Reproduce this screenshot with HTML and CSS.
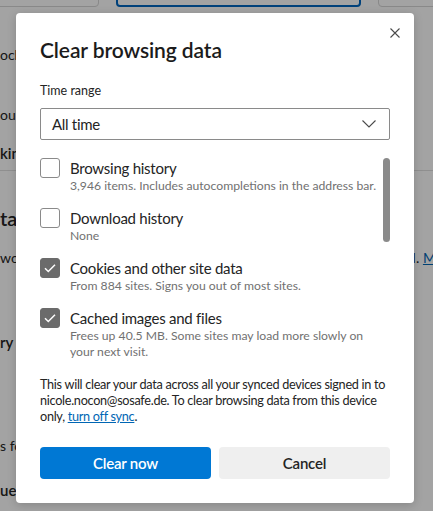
FILE: index.html
```html
<!DOCTYPE html>
<html lang="en">
<head>
<meta charset="utf-8">
<title>Privacy, search, and services</title>
<link rel="stylesheet" href="styles.css">
</head>
<body>
  <div class="page">
    <div class="topbar">
      <div class="tb-btn tb-left"></div>
      <div class="tb-btn tb-active"></div>
      <div class="tb-btn tb-right"></div>
    </div>
    <div class="page-lines">
      <div class="bg-line l1">ocked trackers</div>
      <div class="bg-line l2">ou can block trackers</div>
      <div class="bg-line strong l3">king prevention</div>
      <div class="bg-sep"></div>
      <div class="bg-line heading l4">ta</div>
      <div class="bg-line split l5">
        <span class="split-left">words, cookies, and more. Only data from this profile will be deleted</span>
        <span class="split-right">. <a href="#">Manage</a></span>
      </div>
      <div class="bg-line strong l6">ry time you close the browser</div>
      <div class="bg-line l7">s for tracking</div>
      <div class="bg-line strong l8">uests</div>
    </div>
  </div>

  <div class="scrim"></div>

  <div class="dialog" role="dialog" aria-labelledby="dlg-title">
    <button class="close" aria-label="Close">
      <svg width="10" height="10" viewBox="0 0 10 10"><path d="M0.5 0.5 L9.5 9.5 M9.5 0.5 L0.5 9.5" stroke="#4a4a4a" stroke-width="1.1" fill="none"/></svg>
    </button>
    <h1 class="title" id="dlg-title">Clear browsing data</h1>
    <label class="field-label">Time range</label>
    <div class="select">
      <span>All time</span>
      <svg width="14" height="8" viewBox="0 0 14 8"><path d="M0.5 0.5 L7 7 L13.5 0.5" stroke="#4a4a4a" stroke-width="1.1" fill="none"/></svg>
    </div>
    <div class="list-wrap">
      <ul class="list">
        <li class="item">
          <span class="box"></span>
          <div class="item-text">
            <div class="item-label">Browsing history</div>
            <div class="item-sub">3,946 items. Includes autocompletions in the address bar.</div>
          </div>
        </li>
        <li class="item">
          <span class="box"></span>
          <div class="item-text">
            <div class="item-label">Download history</div>
            <div class="item-sub">None</div>
          </div>
        </li>
        <li class="item">
          <span class="box checked"><svg width="20" height="20" viewBox="0 0 20 20"><path d="M5 10.2 L8.3 13.5 L15 6.8" stroke="#fff" stroke-width="1.5" fill="none"/></svg></span>
          <div class="item-text">
            <div class="item-label">Cookies and other site data</div>
            <div class="item-sub">From 884 sites. Signs you out of most sites.</div>
          </div>
        </li>
        <li class="item">
          <span class="box checked"><svg width="20" height="20" viewBox="0 0 20 20"><path d="M5 10.2 L8.3 13.5 L15 6.8" stroke="#fff" stroke-width="1.5" fill="none"/></svg></span>
          <div class="item-text">
            <div class="item-label">Cached images and files</div>
            <div class="item-sub">Frees up 40.5 MB. Some sites may load more slowly on your next visit.</div>
          </div>
        </li>
        <li class="item">
          <span class="box"></span>
          <div class="item-text">
            <div class="item-label">Passwords</div>
            <div class="item-sub">None</div>
          </div>
        </li>
        <li class="item">
          <span class="box"></span>
          <div class="item-text">
            <div class="item-label">Autofill form data (includes forms and cards)</div>
            <div class="item-sub">None</div>
          </div>
        </li>
      </ul>
      <div class="scroll-track"><div class="scroll-thumb"></div></div>
    </div>
    <p class="note">This will clear your data across all your synced devices signed in to nicole.nocon@sosafe.de. To clear browsing data from this device only, <a href="#">turn off sync</a>.</p>
    <div class="actions">
      <button class="btn primary">Clear now</button>
      <button class="btn secondary">Cancel</button>
    </div>
  </div>
</body>
</html>
```
FILE: styles.css
```css
* { box-sizing: border-box; }

html, body { margin: 0; }

body {
  width: 433px;
  height: 511px;
  overflow: hidden;
  position: relative;
  background: #fff;
  font-family: Lato, "Open Sans", sans-serif;
  color: #242424;
}

/* ---- settings page underneath the dialog ---- */
.page {
  width: 433px;
  height: 511px;
  overflow: hidden;
}
.topbar {
  display: flex;
  align-items: flex-end;
  height: 7px;
}
.tb-btn {
  flex: none;
  height: 32px;
  border: 1px solid #d6d6d6;
  border-radius: 4px;
}
.tb-left { width: 180px; margin-left: -81px; }
.tb-active { width: 245px; margin-left: 17px; border: 2px solid #0067c0; }
.tb-right { width: 60px; margin-left: 17px; }

.page-lines {
  display: flex;
  flex-direction: column;
  overflow: hidden;
}
.bg-line {
  white-space: nowrap;
  overflow: hidden;
  font-size: 14px;
  line-height: 20px;
  color: #242424;
}
.bg-line.strong { font-weight: 600; font-size: 15px; }
.bg-line.heading { font-weight: 600; font-size: 20px; line-height: 28px; }
.l1 { margin-top: 38px; }
.l2 { margin-top: 40px; }
.l3 { margin-top: 18px; }
.bg-sep { margin-top: 7px; height: 1px; background: #e0e0e0; }
.l4 { margin-top: 33px; }
.l5 { margin-top: 16px; }
.l6 { margin-top: 64px; }
.l7 { margin-top: 84px; }
.l8 { margin-top: 24px; }
.split { display: flex; }
.split-left { width: 416px; flex: none; overflow: hidden; }
.split-right a { color: #0066b4; }

.scrim {
  position: absolute;
  inset: 0;
  background: rgba(0, 0, 0, 0.36);
}

/* ---- dialog ---- */
.dialog {
  position: absolute;
  left: 16px;
  top: 13px;
  width: 398px;
  background: #fff;
  border-radius: 4px;
  box-shadow: 0 2px 10px rgba(0, 0, 0, 0.18);
  padding: 23px 24px 24px;
}

.close {
  position: absolute;
  top: 4px;
  right: 3px;
  width: 32px;
  height: 32px;
  padding: 0;
  border: none;
  background: transparent;
  display: flex;
  align-items: center;
  justify-content: center;
}

.title {
  margin: 0;
  font-size: 21px;
  font-weight: 600;
  line-height: 28px;
  letter-spacing: -0.1px;
  color: #1b1b1b;
}

.field-label {
  display: block;
  margin-top: 17px;
  font-size: 12.5px;
  line-height: 20px;
}

.select {
  margin-top: 7px;
  height: 32px;
  border: 1px solid #8a8a8a;
  border-radius: 2px;
  display: flex;
  align-items: center;
  justify-content: space-between;
  padding: 0 13px 0 11px;
  font-size: 15px;
  letter-spacing: -0.3px;
}

.list-wrap {
  margin-top: 18px;
  height: 208px;
  display: flex;
}
.list {
  flex: 1;
  margin: 0;
  padding: 0;
  list-style: none;
  overflow: hidden;
  display: flex;
  flex-direction: column;
  gap: 14px;
}
.item {
  display: flex;
  gap: 10px;
}
.box {
  flex: none;
  width: 20px;
  height: 20px;
  border: 1px solid #8a8a8a;
  border-radius: 3px;
  background: #fff;
  position: relative;
}
.box svg { position: absolute; left: -1px; top: -1px; }
.box.checked { background: #6b6b6b; border-color: #6b6b6b; }
.item-label {
  font-size: 15px;
  line-height: 20px;
  letter-spacing: -0.25px;
  color: #242424;
}
.item-sub {
  font-size: 12.2px;
  line-height: 16px;
  color: #717171;
}

.scroll-track {
  flex: none;
  width: 7px;
}
.scroll-thumb {
  height: 84px;
  border-radius: 4px;
  background: #8a8a8a;
}

.note {
  margin: 10px 0 0;
  font-size: 12.7px;
  line-height: 16px;
  letter-spacing: -0.3px;
  color: #242424;
}
.note a {
  color: #0066b4;
  text-decoration: underline;
}

.actions {
  display: flex;
  gap: 8px;
  margin-top: 23px;
}
.btn {
  flex: 1;
  height: 32px;
  border: none;
  border-radius: 4px;
  font-family: inherit;
  font-size: 15px;
  font-weight: 600;
  letter-spacing: -0.2px;
}
.btn.primary { background: #0078d4; color: #fff; }
.btn.secondary { background: #efefef; color: #242424; }
```
